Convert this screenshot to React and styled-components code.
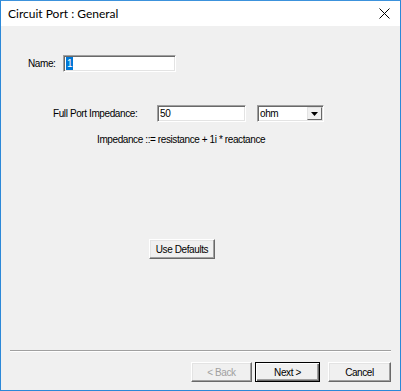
import React from "react";
import styled, { createGlobalStyle } from "styled-components";

const GlobalStyle = createGlobalStyle`
  html, body {
    margin: 0;
    padding: 0;
    background: #ffffff;
  }
  * {
    box-sizing: border-box;
  }
`;

const Window = styled.div`
  width: 401px;
  height: 391px;
  border: 1px solid #2b88d8;
  border-top-color: #3c92dc;
  display: flex;
  flex-direction: column;
  background: #f0f0f0;
  font-family: "Liberation Sans", Arial, sans-serif;
  font-size: 10px;
  letter-spacing: -0.4px;
  color: #000;
`;

const TitleBar = styled.div`
  height: 25px;
  background: #ffffff;
  display: flex;
  align-items: center;
  justify-content: space-between;
  padding: 0 10px 0 7px;
`;

const Title = styled.span`
  font-family: "Lato", "Noto Sans", sans-serif;
  font-size: 12px;
  letter-spacing: 0;
  color: #000;
`;

const CloseButton = styled.div`
  width: 12px;
  height: 12px;
  display: flex;
  align-items: center;
  justify-content: center;
`;

const Body = styled.div`
  flex: 1;
  display: flex;
  flex-direction: column;
  padding-top: 29px;
`;

const Row = styled.div`
  display: flex;
  align-items: center;
  height: 17px;
  margin-top: ${(p) => p.top || 0}px;
  padding-left: ${(p) => p.left || 0}px;
`;

const Label = styled.span`
  width: ${(p) => p.width}px;
  white-space: nowrap;
`;

const Sunken = styled.div`
  width: ${(p) => p.width}px;
  height: 17px;
  margin-left: ${(p) => p.gap || 0}px;
  background: #ffffff;
  border-top: 1px solid #a0a0a0;
  border-left: 1px solid #a0a0a0;
  border-bottom: 1px solid #ffffff;
  border-right: 1px solid #ffffff;
  box-shadow: inset 1px 1px 0 #696969, inset -1px -1px 0 #e3e3e3;
  display: flex;
  align-items: center;
  padding-left: 2px;
`;

const Selected = styled.span`
  background: #0078d7;
  color: #fff;
  padding: 0 1px;
  line-height: 13px;
`;

const DropArrow = styled.div`
  margin-left: auto;
  width: 15px;
  height: 13px;
  margin-right: 1px;
  background: #f0f0f0;
  border-top: 1px solid #e3e3e3;
  border-left: 1px solid #e3e3e3;
  border-bottom: 1px solid #696969;
  border-right: 1px solid #696969;
  display: flex;
  align-items: center;
  justify-content: center;
`;

const Formula = styled.div`
  margin-top: 11px;
  padding-left: 96px;
  line-height: 13px;
`;

const ButtonRow = styled.div`
  margin-top: 93px;
  padding-left: ${(p) => p.left}px;
  display: flex;
`;

const Button = styled.div`
  width: ${(p) => p.width}px;
  height: 20px;
  display: flex;
  align-items: center;
  justify-content: center;
  background: #f0f0f0;
  color: ${(p) => (p.disabled ? "#a0a0a0" : "#000")};
  border-top: 1px solid #ffffff;
  border-left: 1px solid #ffffff;
  border-bottom: 1px solid #696969;
  border-right: 1px solid #696969;
  box-shadow: inset -1px -1px 0 #a0a0a0, inset 1px 1px 0 #e3e3e3;
  margin-left: ${(p) => p.gap || 0}px;
  ${(p) =>
    p.primary &&
    `
    border: 1px solid #000;
    box-shadow: inset 1px 1px 0 #ffffff, inset -1px -1px 0 #696969, inset -2px -2px 0 #a0a0a0;
  `}
`;

const Footer = styled.div`
  margin-top: auto;
  padding: 0 9px 8px 9px;
`;

const Separator = styled.div`
  height: 2px;
  border-top: 1px solid #a0a0a0;
  border-bottom: 1px solid #ffffff;
`;

const Buttons = styled.div`
  margin-top: 10px;
  display: flex;
  justify-content: flex-end;
`;

export default function App() {
  return (
    <>
      <GlobalStyle />
      <Window>
        <TitleBar>
          <Title>Circuit Port : General</Title>
          <CloseButton>
            <svg width="11" height="11" viewBox="0 0 11 11">
              <path d="M0.5 0.5 L10.5 10.5 M10.5 0.5 L0.5 10.5" stroke="#000" strokeWidth="1" />
            </svg>
          </CloseButton>
        </TitleBar>
        <Body>
          <Row left={27}>
            <Label width={35}>Name:</Label>
            <Sunken width={113}>
              <Selected>1</Selected>
            </Sunken>
          </Row>
          <Row top={33} left={52}>
            <Label width={104}>Full Port Impedance:</Label>
            <Sunken width={89}>50</Sunken>
            <Sunken width={67} gap={11}>
              ohm
              <DropArrow>
                <svg width="7" height="4" viewBox="0 0 7 4">
                  <path d="M0 0 H7 L3.5 4 Z" fill="#000" />
                </svg>
              </DropArrow>
            </Sunken>
          </Row>
          <Formula>Impedance ::= resistance + 1i * reactance</Formula>
          <ButtonRow left={148}>
            <Button width={66}>Use Defaults</Button>
          </ButtonRow>
          <Footer>
            <Separator />
            <Buttons>
              <Button width={61} disabled>
                &lt; Back
              </Button>
              <Button width={65} gap={3} primary>
                Next &gt;
              </Button>
              <Button width={63} gap={8}>
                Cancel
              </Button>
            </Buttons>
          </Footer>
        </Body>
      </Window>
    </>
  );
}
